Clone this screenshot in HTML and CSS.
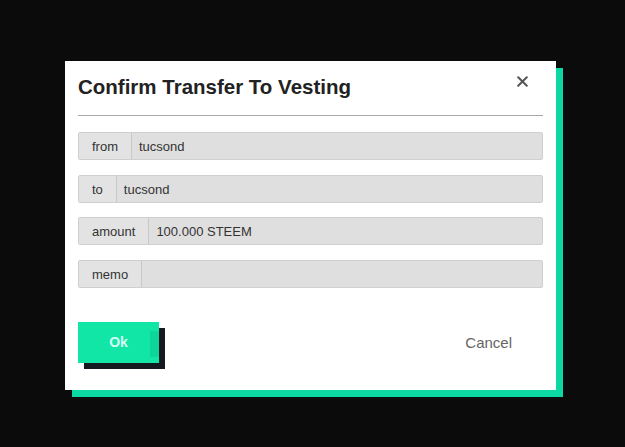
FILE: index.html
```html
<!DOCTYPE html>
<html lang="en">
  <head>
    <meta charset="UTF-8" />
    <meta name="viewport" content="width=device-width, initial-scale=1.0" />
    <title>Confirm Transfer To Vesting</title>
    <link rel="stylesheet" href="styles.css">
  </head>
  <body>
    <div class="modal">
      <div class="modal-header">
        <h2>Confirm Transfer To Vesting</h2>
        <button class="close" aria-label="close">
          <svg width="11" height="11" viewBox="0 0 11 11">
            <path d="M1.2 1.2 L9.8 9.8 M9.8 1.2 L1.2 9.8" stroke="#555" stroke-width="2" stroke-linecap="round" />
          </svg>
        </button>
      </div>
      <hr class="divider" />
      <div class="fields">
        <div class="input-group">
          <span class="label">from</span>
          <span class="value">tucsond</span>
        </div>
        <div class="input-group">
          <span class="label">to</span>
          <span class="value">tucsond</span>
        </div>
        <div class="input-group">
          <span class="label">amount</span>
          <span class="value">100.000 STEEM</span>
        </div>
        <div class="input-group">
          <span class="label">memo</span>
          <span class="value"></span>
        </div>
      </div>
      <div class="modal-footer">
        <button class="btn-ok">Ok</button>
        <button class="btn-cancel">Cancel</button>
      </div>
    </div>
  </body>
</html>
```

FILE: styles.css
```css
body {
  margin: 0;
  padding: 61px 0 0 65px;
  background: #0b0b0b;
  font-family: "Liberation Sans", Arial, sans-serif;
  color: #333;
  height: 447px;
  box-sizing: border-box;
}
.modal {
  width: 491px;
  height: 329px;
  box-sizing: border-box;
  background: #fff;
  padding: 13px 13px 0 13px;
  box-shadow: 7px 7px 0 #0bd8a2;
}
.modal-header {
  display: flex;
  justify-content: space-between;
  align-items: flex-start;
}
.modal-header h2 {
  margin: 0;
  font-size: 20.5px;
  line-height: 25px;
  font-weight: bold;
  color: #222;
}
.close {
  border: none;
  background: none;
  padding: 0;
  margin: 2px 15px 0 0;
  width: 11px;
  height: 11px;
  display: flex;
}
.divider {
  border: none;
  border-top: 1px solid #a8a8a8;
  margin: 16px 0 16px 0;
}
.fields {
  display: flex;
  flex-direction: column;
  gap: 14.5px;
}
.input-group {
  display: flex;
  height: 28px;
  border: 1px solid #cfcfcf;
  border-radius: 2px;
  background: #dfdfdf;
  box-sizing: border-box;
  font-size: 13px;
  line-height: 26px;
  overflow: hidden;
}
.label {
  padding: 1px 13px 0;
  border-right: 1px solid #c8c8c8;
  background: #e3e3e3;
  color: #333;
}
.value {
  padding: 1px 7px 0;
  flex: 1;
  color: #333;
}
.modal-footer {
  display: flex;
  justify-content: space-between;
  margin-top: 34px;
}
.btn-ok {
  position: relative;
  width: 81px;
  height: 41px;
  border: none;
  background: #11e6a7;
  color: #d4fff4;
  font-family: inherit;
  font-size: 14px;
  font-weight: bold;
  box-shadow: 6px 6px 0 #141a1f;
}
.btn-ok::after {
  content: "";
  position: absolute;
  right: 0;
  top: 9px;
  bottom: 6px;
  width: 9px;
  background: rgba(0, 90, 60, 0.12);
}
.btn-cancel {
  height: 41px;
  padding: 0 31px;
  border: none;
  background: none;
  color: #666;
  font-family: inherit;
  font-size: 15px;
}
```
